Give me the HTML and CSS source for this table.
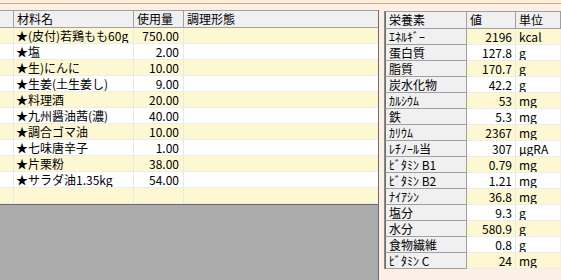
FILE: index.html
```html
<!DOCTYPE html>
<html lang="ja">
<head>
<meta charset="utf-8">
<title>材料と栄養素</title>
<link rel="stylesheet" href="styles.css">
</head>
<body>
<div class="app">
  <div class="topbar"><div class="accent"></div></div>
  <div class="panes">
    <section class="ingredients">
      <div class="grid ing-grid">
        <div class="hcell"></div><div class="hcell">材料名</div><div class="hcell">使用量</div><div class="hcell last">調理形態</div>

        <div class="cell y"></div><div class="cell y">★(皮付)若鶏もも60g</div><div class="cell y num">750.00</div><div class="cell y last"></div>
        <div class="cell"></div><div class="cell">★塩</div><div class="cell num">2.00</div><div class="cell last"></div>
        <div class="cell y"></div><div class="cell y">★生)にんに</div><div class="cell y num">10.00</div><div class="cell y last"></div>
        <div class="cell"></div><div class="cell">★生姜(土生姜し)</div><div class="cell num">9.00</div><div class="cell last"></div>
        <div class="cell y"></div><div class="cell y">★料理酒</div><div class="cell y num">20.00</div><div class="cell y last"></div>
        <div class="cell"></div><div class="cell">★九州醤油茜(濃)</div><div class="cell num">40.00</div><div class="cell last"></div>
        <div class="cell y"></div><div class="cell y">★調合ゴマ油</div><div class="cell y num">10.00</div><div class="cell y last"></div>
        <div class="cell"></div><div class="cell">★七味唐辛子</div><div class="cell num">1.00</div><div class="cell last"></div>
        <div class="cell y"></div><div class="cell y">★片栗粉</div><div class="cell y num">38.00</div><div class="cell y last"></div>
        <div class="cell"></div><div class="cell">★サラダ油1.35kg</div><div class="cell num">54.00</div><div class="cell last"></div>
        <div class="cell y"></div><div class="cell y"></div><div class="cell y num"></div><div class="cell y last"></div>
      </div>
      <div class="empty-area"></div>
    </section>

    <section class="nutrients">
      <div class="grid nut-grid">
        <div class="hcell">栄養素</div><div class="hcell">値</div><div class="hcell last">単位</div>

        <div class="rh">ｴﾈﾙｷﾞｰ</div><div class="cell y num">2196</div><div class="cell y unit">kcal</div>
        <div class="rh">蛋白質</div><div class="cell num">127.8</div><div class="cell unit">g</div>
        <div class="rh">脂質</div><div class="cell y num">170.7</div><div class="cell y unit">g</div>
        <div class="rh">炭水化物</div><div class="cell num">42.2</div><div class="cell unit">g</div>
        <div class="rh">ｶﾙｼｳﾑ</div><div class="cell y num">53</div><div class="cell y unit">mg</div>
        <div class="rh">鉄</div><div class="cell num">5.3</div><div class="cell unit">mg</div>
        <div class="rh">ｶﾘｳﾑ</div><div class="cell y num">2367</div><div class="cell y unit">mg</div>
        <div class="rh">ﾚﾁﾉｰﾙ当</div><div class="cell num">307</div><div class="cell unit">μgRA</div>
        <div class="rh">ﾋﾞﾀﾐﾝ B1</div><div class="cell y num">0.79</div><div class="cell y unit">mg</div>
        <div class="rh">ﾋﾞﾀﾐﾝ B2</div><div class="cell num">1.21</div><div class="cell unit">mg</div>
        <div class="rh">ﾅｲｱｼﾝ</div><div class="cell y num">36.8</div><div class="cell y unit">mg</div>
        <div class="rh">塩分</div><div class="cell num">9.3</div><div class="cell unit">g</div>
        <div class="rh">水分</div><div class="cell y num">580.9</div><div class="cell y unit">g</div>
        <div class="rh">食物繊維</div><div class="cell num">0.8</div><div class="cell unit">g</div>
        <div class="rh">ﾋﾞﾀﾐﾝ C</div><div class="cell y num">24</div><div class="cell y unit">mg</div>
      </div>
    </section>
  </div>
</div>
</body>
</html>
```

FILE: styles.css
```css
html, body {
  margin: 0;
  padding: 0;
}

body {
  width: 561px;
  height: 280px;
  overflow: hidden;
  background: #fcefe5;
  font-family: "Noto Sans CJK JP", "Noto Sans", sans-serif;
  font-size: 12px;
  color: #000;
}

.app {
  display: flex;
  flex-direction: column;
  height: 280px;
}

/* thin accent strip across the top of the window */
.topbar {
  height: 10px;
  padding-top: 3px;
  box-sizing: border-box;
}

.accent {
  height: 1px;
  background: #f6a25a;
}

.panes {
  flex: 1;
  display: flex;
  align-items: flex-start;
  min-height: 0;
}

.grid {
  display: grid;
}

.hcell,
.cell,
.rh {
  box-sizing: border-box;
  white-space: nowrap;
  overflow: hidden;
  line-height: 15px;
  padding: 0 2px;
}

/* column headers */
.hcell {
  height: 18px;
  line-height: 16px;
  background: #f0f0f0;
  border-top: 1px solid #a0a0a0;
  border-right: 1px solid #a0a0a0;
  border-bottom: 1px solid #a0a0a0;
  padding-left: 3px;
}

.cell {
  height: 16px;
  background: #fff;
  border-right: 1px solid #e8e8e8;
  border-bottom: 1px solid #ececec;
}

.cell.y {
  background: #fef8d2;
}

.num {
  text-align: right;
  padding-right: 4px;
}

/* ---- ingredient list ---- */
.ingredients {
  width: 379px;
  height: 270px;
  display: flex;
  flex-direction: column;
  border-right: 1px solid #6c6c6c;
  box-sizing: border-box;
}

.ing-grid {
  grid-template-columns: 14px 120px 50px 194px;
}

.ing-grid .hcell.last,
.ing-grid .cell.last {
  border-right: none;
}

.empty-area {
  flex: 1;
  background: #ababab;
  border-top: 1px solid #6c6c6c;
}

/* ---- nutrient totals ---- */
.nutrients {
  margin-left: 5px;
  margin-top: 1px;
  width: 177px;
  border-left: 1px solid #8a8a8a;
  box-sizing: border-box;
}

.nut-grid {
  grid-template-columns: 82px 49px 45px;
}

.nut-grid .hcell:first-child {
  border-left: 1px solid #6c6c6c;
}

.rh {
  height: 16px;
  background: #f0f0f0;
  border-left: 1px solid #6c6c6c;
  border-right: 1px solid #a0a0a0;
  border-bottom: 1px solid #a0a0a0;
  padding-left: 3px;
}

.nut-grid .num {
  padding-right: 3px;
}

.unit {
  padding-left: 3px;
  border-right: 1px solid #f0f0f0;
}
```
